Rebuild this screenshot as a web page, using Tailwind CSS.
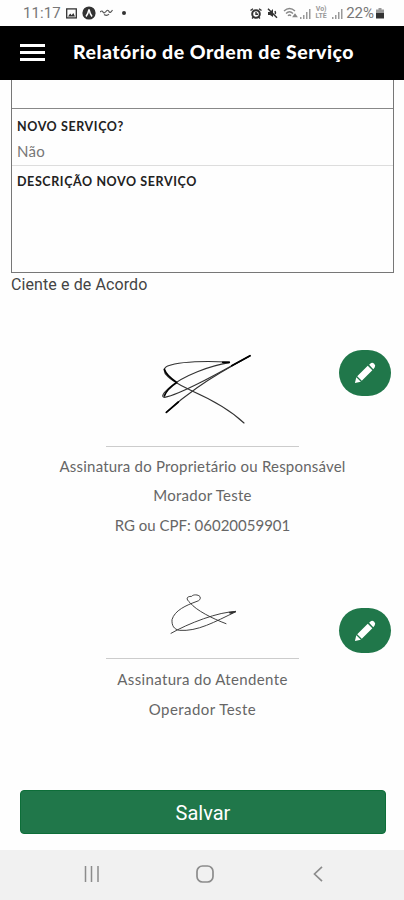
<!DOCTYPE html>
<html lang="pt-BR">
<head>
    <meta charset="UTF-8">
    <meta name="viewport" content="width=device-width, initial-scale=1.0">
    <title>Relatório de Ordem de Serviço</title>
    <script src="https://cdn.jsdelivr.net/npm/@tailwindcss/browser@4"></script>
</head>
<body class="bg-[#fefefe] font-[Lato,sans-serif] w-[404px] h-[900px] overflow-hidden flex flex-col">
    <!-- Status bar -->
    <div class="h-[26px] shrink-0 flex items-center pl-[23px] pr-[20px] font-[Roboto,sans-serif] text-[#777]">
        <span class="text-[15px] w-[43px] tracking-[0.1px] whitespace-nowrap">11:17</span>
        <svg class="w-[11px] h-[11px]" viewBox="0 0 11 11" fill="none" stroke="#333" stroke-width="1.3"><rect x=".7" y=".9" width="9.6" height="9"/><path d="M2 8.5l2.2-3 1.5 1.7L7.3 5 9 8.5z" fill="#333" stroke="none"/></svg>
        <svg class="w-[14px] h-[14px] ml-[5px]" viewBox="0 0 14 14"><circle cx="7" cy="7" r="6.6" fill="#333"/><path d="M4 10.5Q6 8 7 3.5 8 8 10 10.5" fill="none" stroke="#fff" stroke-width="1.5"/></svg>
        <svg class="w-[13px] h-[10px] ml-[4px]" viewBox="0 0 13 10" fill="none" stroke="#555" stroke-width="1.2"><path d="M0 4q2-2 3 0t3-.5 3 0 3.5-1.5M4 6.5q3 2 5-.5"/></svg>
        <span class="size-[4px] rounded-full bg-[#333] ml-[9px]"></span>
        <div class="flex items-center ml-auto">
            <svg class="w-[12px] h-[11px]" viewBox="0 0 12 11" fill="none" stroke="#333"><circle cx="6" cy="6" r="3.8" stroke-width="2"/><path d="M6 4v2.3h2M0.5 2.5L3 .7M11.5 2.5L9 .7M2 10.5l1.5-1.5M10 10.5L8.5 9" stroke-width="1.4"/></svg>
            <svg class="w-[11px] h-[11px] ml-[5px]" viewBox="0 0 11 11"><path d="M1 4h2l3-3v8L3 7H1z" fill="#333"/><path d="M1 .8l9 9M8 3q1 2 0 3" stroke="#333" stroke-width="1.5" fill="none"/></svg>
            <svg class="w-[15px] h-[12px] ml-[5px]" viewBox="0 0 15 12" fill="none" stroke="#888" stroke-width="1.4"><path d="M1 4q5.5-5 11 0M3 6.5q3.5-3.5 7 0M5 8.7q1.5-1.5 3 0"/><path d="M12 7.5l-1.5 2h3z" fill="#888"/></svg>
            <svg class="w-[11px] h-[11px] ml-[2px]" viewBox="0 0 11 11" fill="#999"><path d="M0 9h1.5v2H0zM3 7h1.5v4H3zM6 4h1.5v7H6zM9 1h1.5v10H9z"/></svg>
            <div class="w-[14px] ml-[3px] flex flex-col text-[7px] leading-[7px] font-bold text-center text-[#999]">
                <span>Vo)</span>
                <span>LTE</span>
            </div>
            <svg class="w-[11px] h-[11px] ml-[4px]" viewBox="0 0 11 11" fill="#999"><path d="M0 9h1.5v2H0zM3 7h1.5v4H3zM6 4h1.5v7H6zM9 1h1.5v10H9z"/></svg>
            <span class="text-[15px] ml-[3px]">22%</span>
            <svg class="w-[8px] h-[11px] ml-[2px]" viewBox="0 0 8 11"><path d="M2.5 0h3v1.5H8V11H0V1.5h2.5z" fill="#999"/><path d="M0 5h8v5H0z" fill="#333"/></svg>
        </div>
    </div>

    <!-- App bar -->
    <header class="h-[54px] shrink-0 bg-black text-white flex items-center pl-[20px]">
        <div class="w-[25px] -mt-[2px] flex flex-col gap-[4px]">
            <span class="h-[3px] bg-white"></span>
            <span class="h-[3px] bg-white"></span>
            <span class="h-[3px] bg-white"></span>
        </div>
        <h1 class="ml-[28px] -mt-[2px] text-[19.5px] font-black tracking-[0.5px] whitespace-nowrap">Relatório de Ordem de Serviço</h1>
    </header>

    <main class="flex-1 flex flex-col">
        <!-- Report table -->
        <div class="mx-[11px] w-[383px] h-[193px] border-x border-b border-[#777] text-[#222]">
            <div class="h-[29px] border-b border-[#888]"></div>
            <div class="h-[57px] border-b border-[#ddd] pl-[5px] pt-[9px]">
                <p class="leading-[18px] text-[12.5px] font-bold tracking-[0.6px]">NOVO SERVIÇO?</p>
                <p class="mt-[5px] leading-[20px] text-[15px] tracking-[0.3px] text-[#777]">Não</p>
            </div>
            <div class="pl-[5px] pt-[7px]">
                <p class="leading-[18px] text-[12.5px] font-bold tracking-[0.6px]">DESCRIÇÃO NOVO SERVIÇO</p>
            </div>
        </div>
        <p class="ml-[11px] h-[22px] leading-[23px] text-[16px] tracking-[0.1px] font-[Roboto,sans-serif] text-[#444]">Ciente e de Acordo</p>

        <!-- Owner signature -->
        <section class="h-[245px] flex">
            <div class="w-[335px] pl-[70px] flex flex-col items-center text-[15px] text-[#666]">
                <svg class="w-[150px] h-[116px] mt-[35px] ml-[5px] shrink-0" viewBox="0 0 450 348" fill="none" stroke="#333" stroke-width="3.5" stroke-linecap="round">
                    <path d="M298 96C230 93 150 94 113 108C98 114 101 130 113 139C130 157 165 172 188 184C240 207 300 240 342 279"/>
                    <path d="M298 98C240 107 160 137 119 172C101 188 91 201 104 202C150 193 250 138 360 77"/>
                    <path d="M109 247C160 200 220 153 360 78"/>
                    <path d="M109 247L145 216M103 118Q109 137 140 157M103 198Q110 178 140 158M278 97h20M305 107L360 77" stroke-width="5" stroke="#000"/>
                </svg>
                <div class="w-[193px] h-px bg-[#ccc]"></div>
                <div class="mt-[5px] leading-[29.5px] text-center whitespace-nowrap">
                    <p class="tracking-[0.2px]">Assinatura do Proprietário ou Responsável</p>
                    <p class="tracking-[0.25px]">Morador Teste</p>
                    <p class="tracking-[0px]">RG ou CPF: 06020059901</p>
                </div>
            </div>
            <button class="mt-[55px] ml-[4px] w-[52px] h-[46px] rounded-[23px] bg-[#20774a] flex items-center justify-center">
                <svg class="w-[22px] h-[22px]" viewBox="0 0 24 24" fill="#fff"><path d="M1 23L2.5 16.5 7.5 21.5zM3.5 15.5L15 4 20 9 8.5 20.5zM16.5 3L18 1.5Q20 0 22 2T22.5 6L21 8z"/></svg>
            </button>
        </section>

        <!-- Attendant signature -->
        <section class="h-[250px] flex">
            <div class="w-[335px] pl-[70px] flex flex-col items-center text-[15px] text-[#666]">
                <svg class="w-[80px] h-[50px] mt-[50px] shrink-0" viewBox="216 30 240 150" fill="none" stroke="#333" stroke-width="2.8" stroke-linecap="round">
                    <path d="M405 131C365 116 315 91 297 68C284 57 286 49 302 49C306 43 322 43 327 50C330 57 325 62 318 64C285 76 251 91 243 119C242 137 249 148 265 151C320 155 370 126 435 95C385 94 290 131 240 160"/>
                    <path d="M415 97L434 94 420 101z" fill="#222"/>
                </svg>
                <div class="mt-[18px] w-[193px] h-px bg-[#ccc]"></div>
                <div class="mt-[5px] leading-[30px] text-center whitespace-nowrap">
                    <p class="tracking-[0.35px]">Assinatura do Atendente</p>
                    <p class="tracking-[0.45px]">Operador Teste</p>
                </div>
            </div>
            <button class="mt-[68px] ml-[4px] w-[52px] h-[45px] rounded-[23px] bg-[#20774a] flex items-center justify-center">
                <svg class="w-[22px] h-[22px]" viewBox="0 0 24 24" fill="#fff"><path d="M1 23L2.5 16.5 7.5 21.5zM3.5 15.5L15 4 20 9 8.5 20.5zM16.5 3L18 1.5Q20 0 22 2T22.5 6L21 8z"/></svg>
            </button>
        </section>

        <button class="ml-[20px] w-[366px] h-[44px] rounded-[4px] bg-[#20774a] border border-[#0d6e39] text-white font-[Roboto,sans-serif] text-[20px] leading-[45px]">Salvar</button>
    </main>

    <!-- Android navigation -->
    <nav class="h-[50px] shrink-0 bg-[#f1f1f1] flex items-center pl-[84px] text-[#8c8c8c]">
        <svg class="w-[16px] h-[18px] -mt-[2px]" viewBox="0 0 16 18" fill="none" stroke="currentColor" stroke-width="1.5"><path d="M1.5 1v16M7.5 1v16M14 1v16"/></svg>
        <svg class="w-[18px] h-[18px] -mt-[2px] ml-[96px]" viewBox="0 0 18 18" fill="none" stroke="currentColor" stroke-width="1.7"><rect x="1" y="1" width="16" height="16" rx="5.5"/></svg>
        <svg class="w-[10px] h-[16px] -mt-[2px] ml-[99px]" viewBox="0 0 10 16" fill="none" stroke="currentColor" stroke-width="1.7"><path d="M9 .8L1.5 8 9 15.2"/></svg>
    </nav>
</body>
</html>
